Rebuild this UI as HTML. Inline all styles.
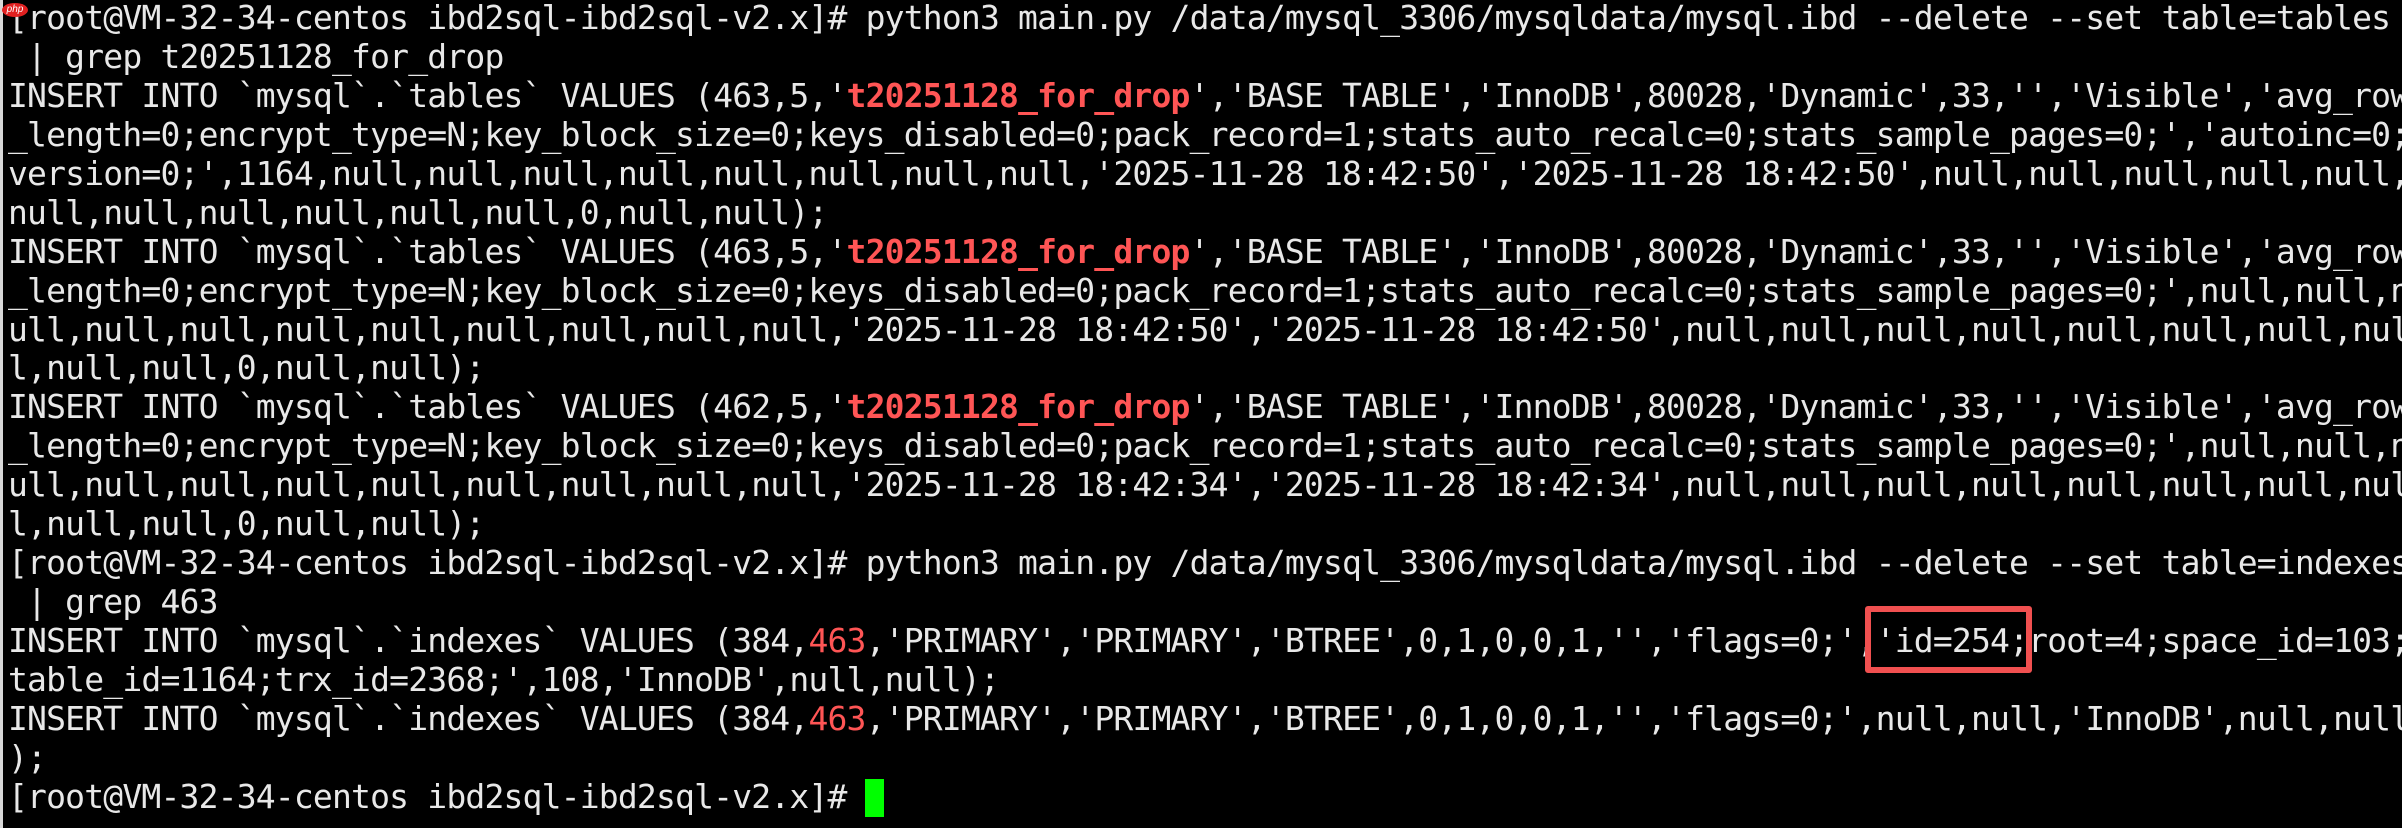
<!DOCTYPE html>
<html><head><meta charset="utf-8"><style>
html,body{margin:0;padding:0;background:#000;width:2402px;height:828px;overflow:hidden;position:relative}
.edge{position:absolute;left:0;top:0;width:3px;height:828px;background:#d8d8d8}
pre{position:absolute;left:8px;top:-1px;margin:0;font-family:"DejaVu Sans Mono","Liberation Mono",monospace;font-size:33px;letter-spacing:-0.81px;line-height:38.93px;color:#e8e8e8;white-space:pre}
.r{color:#ff5555;font-weight:bold}
.n{color:#ff5555}
.box{position:absolute;left:1865px;top:606px;width:155px;height:55px;border:6px solid #f05050;border-radius:3px}
.cur{position:absolute;left:865px;top:779px;width:19px;height:38px;background:#00ff00}
.php{position:absolute;left:2px;top:3px;width:26px;height:14px;border-radius:50%;background:#e02020;color:#fff;font:italic 10px "Liberation Sans",sans-serif;text-align:center;line-height:14px}
</style></head><body>
<div class="edge"></div>
<pre>[root@VM-32-34-centos ibd2sql-ibd2sql-v2.x]# python3 main.py /data/mysql_3306/mysqldata/mysql.ibd --delete --set table=tables
 | grep t20251128_for_drop
INSERT INTO `mysql`.`tables` VALUES (463,5,'<span class="r">t20251128_for_drop</span>','BASE TABLE','InnoDB',80028,'Dynamic',33,'','Visible','avg_row
_length=0;encrypt_type=N;key_block_size=0;keys_disabled=0;pack_record=1;stats_auto_recalc=0;stats_sample_pages=0;','autoinc=0;
version=0;',1164,null,null,null,null,null,null,null,null,'2025-11-28 18:42:50','2025-11-28 18:42:50',null,null,null,null,null,
null,null,null,null,null,null,0,null,null);
INSERT INTO `mysql`.`tables` VALUES (463,5,'<span class="r">t20251128_for_drop</span>','BASE TABLE','InnoDB',80028,'Dynamic',33,'','Visible','avg_row
_length=0;encrypt_type=N;key_block_size=0;keys_disabled=0;pack_record=1;stats_auto_recalc=0;stats_sample_pages=0;',null,null,n
ull,null,null,null,null,null,null,null,null,'2025-11-28 18:42:50','2025-11-28 18:42:50',null,null,null,null,null,null,null,nul
l,null,null,0,null,null);
INSERT INTO `mysql`.`tables` VALUES (462,5,'<span class="r">t20251128_for_drop</span>','BASE TABLE','InnoDB',80028,'Dynamic',33,'','Visible','avg_row
_length=0;encrypt_type=N;key_block_size=0;keys_disabled=0;pack_record=1;stats_auto_recalc=0;stats_sample_pages=0;',null,null,n
ull,null,null,null,null,null,null,null,null,'2025-11-28 18:42:34','2025-11-28 18:42:34',null,null,null,null,null,null,null,nul
l,null,null,0,null,null);
[root@VM-32-34-centos ibd2sql-ibd2sql-v2.x]# python3 main.py /data/mysql_3306/mysqldata/mysql.ibd --delete --set table=indexes
 | grep 463
INSERT INTO `mysql`.`indexes` VALUES (384,<span class="n">463</span>,'PRIMARY','PRIMARY','BTREE',0,1,0,0,1,'','flags=0;','id=254;root=4;space_id=103;
table_id=1164;trx_id=2368;',108,'InnoDB',null,null);
INSERT INTO `mysql`.`indexes` VALUES (384,<span class="n">463</span>,'PRIMARY','PRIMARY','BTREE',0,1,0,0,1,'','flags=0;',null,null,'InnoDB',null,null
);
[root@VM-32-34-centos ibd2sql-ibd2sql-v2.x]# </pre>
<div class="box"></div>
<div class="cur"></div>
<div class="php">php</div>
</body></html>
